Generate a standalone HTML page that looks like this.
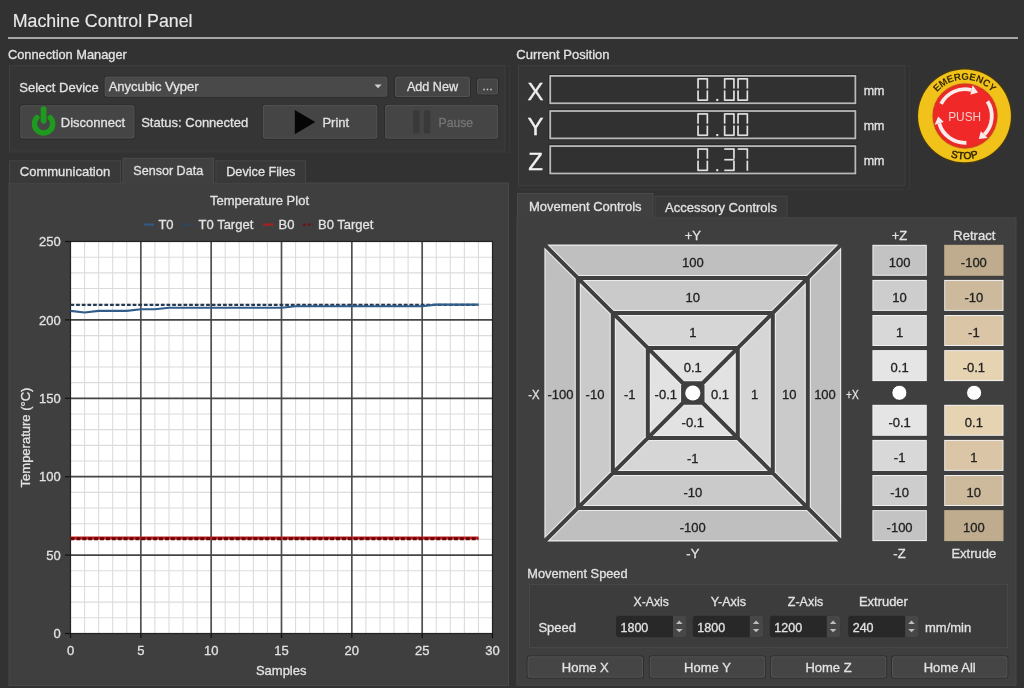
<!DOCTYPE html>
<html><head><meta charset="utf-8"><style>
html,body{margin:0;padding:0;background:#323232;width:1024px;height:688px;overflow:hidden}
svg{display:block;will-change:transform}
text{font-family:"Liberation Sans",sans-serif}
</style></head><body>
<svg width="1024" height="688" viewBox="0 0 1024 688">
<rect x="0" y="0" width="1024" height="688" fill="#323232" />
<text x="12.7" y="27" font-size="17.8" fill="#e8e8e8" stroke="#e8e8e8" stroke-width="0.15" text-anchor="start" >Machine Control Panel</text>
<rect x="8" y="37" width="1010" height="2" fill="#a6a6a6" />
<text x="8" y="58.6" font-size="12.8" fill="#e2e2e2" stroke="#e2e2e2" stroke-width="0.3" text-anchor="start" >Connection Manager</text>
<rect x="9" y="65.3" width="501" height="88" fill="#393939" />
<rect x="10" y="66.3" width="499" height="86" fill="#313131" />
<rect x="9" y="65.3" width="496.5" height="86.2" fill="#3f3f3f" />
<rect x="10" y="66.3" width="494.5" height="84.2" fill="#353535" />
<text x="19.3" y="91.7" font-size="13" fill="#e2e2e2" stroke="#e2e2e2" stroke-width="0.3" text-anchor="start" >Select Device</text>
<rect x="103.8" y="75.8" width="284.40000000000003" height="21.8" rx="3" fill="#2a2a2a"/>
<rect x="104.6" y="76.6" width="282.8" height="20.2" rx="2.5" fill="#535353"/>
<rect x="105.6" y="77.6" width="280.8" height="18.2" rx="2" fill="#494949"/>
<text x="108.7" y="91.3" font-size="13" fill="#e2e2e2" stroke="#e2e2e2" stroke-width="0.3" text-anchor="start" >Anycubic Vyper</text>
<path d="M374.4 84.6 L381.7 84.6 L378.05 88.3 Z" fill="#cfcfcf"/>
<rect x="394.2" y="75.7" width="76.6" height="22.1" rx="3" fill="#2a2a2a"/>
<rect x="395" y="76.5" width="75" height="20.5" rx="2.5" fill="#535353"/>
<rect x="396" y="77.5" width="73" height="18.5" rx="2" fill="#454545"/>
<text x="432.5" y="91.2" font-size="13" fill="#e2e2e2" stroke="#e2e2e2" stroke-width="0.3" text-anchor="middle"  textLength="51.2" lengthAdjust="spacingAndGlyphs">Add New</text>
<rect x="476.2" y="77.7" width="22.6" height="17.6" rx="3" fill="#2a2a2a"/>
<rect x="477" y="78.5" width="21" height="16" rx="2.5" fill="#535353"/>
<rect x="478" y="79.5" width="19" height="14" rx="2" fill="#454545"/>
<circle cx="484" cy="89.5" r="0.9" fill="#bbb"/>
<circle cx="487.5" cy="89.5" r="0.9" fill="#bbb"/>
<circle cx="491" cy="89.5" r="0.9" fill="#bbb"/>
<rect x="19.5" y="104.4" width="115.8" height="35.0" rx="3" fill="#2a2a2a"/>
<rect x="20.3" y="105.2" width="114.2" height="33.4" rx="2.5" fill="#535353"/>
<rect x="21.3" y="106.2" width="112.2" height="31.4" rx="2" fill="#454545"/>
<path d="M50.26 117.69 A9.1 9.1 0 1 1 36.94 117.69" fill="none" stroke="#1e9a1e" stroke-width="5.4" stroke-linecap="round"/>
<line x1="43.6" y1="109.1" x2="43.6" y2="120.8" stroke="#1e9a1e" stroke-width="5.8" stroke-linecap="round"/>
<text x="60.8" y="127.2" font-size="13" fill="#e2e2e2" stroke="#e2e2e2" stroke-width="0.3" text-anchor="start" >Disconnect</text>
<text x="141.2" y="127.2" font-size="13" fill="#e2e2e2" stroke="#e2e2e2" stroke-width="0.3" text-anchor="start" >Status: Connected</text>
<rect x="262.0" y="104.0" width="116.19999999999999" height="35.6" rx="3" fill="#2a2a2a"/>
<rect x="262.8" y="104.8" width="114.6" height="34" rx="2.5" fill="#535353"/>
<rect x="263.8" y="105.8" width="112.6" height="32" rx="2" fill="#454545"/>
<path d="M294.8 109.9 L315.3 122 L294.8 134.2 Z" fill="#050505"/>
<text x="322.4" y="127.2" font-size="13" fill="#e2e2e2" stroke="#e2e2e2" stroke-width="0.3" text-anchor="start" >Print</text>
<rect x="384.3" y="104.0" width="114.69999999999999" height="35.6" rx="3" fill="#2a2a2a"/>
<rect x="385.1" y="104.8" width="113.1" height="34" rx="2.5" fill="#535353"/>
<rect x="386.1" y="105.8" width="111.1" height="32" rx="2" fill="#454545"/>
<rect x="413.2" y="110.4" width="6.3" height="23" fill="#393939" />
<rect x="423.9" y="110.4" width="6.4" height="23" fill="#393939" />
<text x="438.6" y="127.1" font-size="12.2" fill="#757575" stroke="#757575" stroke-width="0.3" text-anchor="start" >Pause</text>
<rect x="8.5" y="182.5" width="500.5" height="503.5" fill="#484848" />
<rect x="9.5" y="183.5" width="498.5" height="501.5" fill="#3f3f3f" />
<rect x="9" y="160.3" width="112" height="22.5" fill="#454545" />
<rect x="10" y="161.3" width="110" height="21.5" fill="#393939" />
<text x="65.0" y="176.35000000000002" font-size="13" fill="#e2e2e2" stroke="#e2e2e2" stroke-width="0.3" text-anchor="middle" >Communication</text>
<rect x="122.5" y="157.8" width="91.5" height="25.5" fill="#4a4a4a" />
<rect x="123.5" y="158.8" width="89.5" height="25.5" fill="#404040" />
<text x="168.25" y="175.25000000000003" font-size="13" fill="#e2e2e2" stroke="#e2e2e2" stroke-width="0.3" text-anchor="middle"  textLength="69.8" lengthAdjust="spacingAndGlyphs">Sensor Data</text>
<rect x="215.5" y="160.3" width="90.5" height="22.5" fill="#454545" />
<rect x="216.5" y="161.3" width="88.5" height="21.5" fill="#393939" />
<text x="260.75" y="176.35000000000002" font-size="13" fill="#e2e2e2" stroke="#e2e2e2" stroke-width="0.3" text-anchor="middle"  textLength="69.2" lengthAdjust="spacingAndGlyphs">Device Files</text>
<text x="259.5" y="204.7" font-size="13" fill="#e2e2e2" stroke="#e2e2e2" stroke-width="0.3" text-anchor="middle" >Temperature Plot</text>
<rect x="70.5" y="241.5" width="422.0" height="392.0" fill="#ffffff" />
<line x1="84.57" y1="241.5" x2="84.57" y2="633.5" stroke="#dcdcdc" stroke-width="1.1"/>
<line x1="98.63" y1="241.5" x2="98.63" y2="633.5" stroke="#dcdcdc" stroke-width="1.1"/>
<line x1="112.70" y1="241.5" x2="112.70" y2="633.5" stroke="#dcdcdc" stroke-width="1.1"/>
<line x1="126.77" y1="241.5" x2="126.77" y2="633.5" stroke="#dcdcdc" stroke-width="1.1"/>
<line x1="154.90" y1="241.5" x2="154.90" y2="633.5" stroke="#dcdcdc" stroke-width="1.1"/>
<line x1="168.97" y1="241.5" x2="168.97" y2="633.5" stroke="#dcdcdc" stroke-width="1.1"/>
<line x1="183.03" y1="241.5" x2="183.03" y2="633.5" stroke="#dcdcdc" stroke-width="1.1"/>
<line x1="197.10" y1="241.5" x2="197.10" y2="633.5" stroke="#dcdcdc" stroke-width="1.1"/>
<line x1="225.23" y1="241.5" x2="225.23" y2="633.5" stroke="#dcdcdc" stroke-width="1.1"/>
<line x1="239.30" y1="241.5" x2="239.30" y2="633.5" stroke="#dcdcdc" stroke-width="1.1"/>
<line x1="253.37" y1="241.5" x2="253.37" y2="633.5" stroke="#dcdcdc" stroke-width="1.1"/>
<line x1="267.43" y1="241.5" x2="267.43" y2="633.5" stroke="#dcdcdc" stroke-width="1.1"/>
<line x1="295.57" y1="241.5" x2="295.57" y2="633.5" stroke="#dcdcdc" stroke-width="1.1"/>
<line x1="309.63" y1="241.5" x2="309.63" y2="633.5" stroke="#dcdcdc" stroke-width="1.1"/>
<line x1="323.70" y1="241.5" x2="323.70" y2="633.5" stroke="#dcdcdc" stroke-width="1.1"/>
<line x1="337.77" y1="241.5" x2="337.77" y2="633.5" stroke="#dcdcdc" stroke-width="1.1"/>
<line x1="365.90" y1="241.5" x2="365.90" y2="633.5" stroke="#dcdcdc" stroke-width="1.1"/>
<line x1="379.97" y1="241.5" x2="379.97" y2="633.5" stroke="#dcdcdc" stroke-width="1.1"/>
<line x1="394.03" y1="241.5" x2="394.03" y2="633.5" stroke="#dcdcdc" stroke-width="1.1"/>
<line x1="408.10" y1="241.5" x2="408.10" y2="633.5" stroke="#dcdcdc" stroke-width="1.1"/>
<line x1="436.23" y1="241.5" x2="436.23" y2="633.5" stroke="#dcdcdc" stroke-width="1.1"/>
<line x1="450.30" y1="241.5" x2="450.30" y2="633.5" stroke="#dcdcdc" stroke-width="1.1"/>
<line x1="464.37" y1="241.5" x2="464.37" y2="633.5" stroke="#dcdcdc" stroke-width="1.1"/>
<line x1="478.43" y1="241.5" x2="478.43" y2="633.5" stroke="#dcdcdc" stroke-width="1.1"/>
<line x1="70.5" y1="617.82" x2="492.5" y2="617.82" stroke="#dcdcdc" stroke-width="1.1"/>
<line x1="70.5" y1="602.14" x2="492.5" y2="602.14" stroke="#dcdcdc" stroke-width="1.1"/>
<line x1="70.5" y1="586.46" x2="492.5" y2="586.46" stroke="#dcdcdc" stroke-width="1.1"/>
<line x1="70.5" y1="570.78" x2="492.5" y2="570.78" stroke="#dcdcdc" stroke-width="1.1"/>
<line x1="70.5" y1="539.42" x2="492.5" y2="539.42" stroke="#dcdcdc" stroke-width="1.1"/>
<line x1="70.5" y1="523.74" x2="492.5" y2="523.74" stroke="#dcdcdc" stroke-width="1.1"/>
<line x1="70.5" y1="508.06" x2="492.5" y2="508.06" stroke="#dcdcdc" stroke-width="1.1"/>
<line x1="70.5" y1="492.38" x2="492.5" y2="492.38" stroke="#dcdcdc" stroke-width="1.1"/>
<line x1="70.5" y1="461.02" x2="492.5" y2="461.02" stroke="#dcdcdc" stroke-width="1.1"/>
<line x1="70.5" y1="445.34" x2="492.5" y2="445.34" stroke="#dcdcdc" stroke-width="1.1"/>
<line x1="70.5" y1="429.66" x2="492.5" y2="429.66" stroke="#dcdcdc" stroke-width="1.1"/>
<line x1="70.5" y1="413.98" x2="492.5" y2="413.98" stroke="#dcdcdc" stroke-width="1.1"/>
<line x1="70.5" y1="382.62" x2="492.5" y2="382.62" stroke="#dcdcdc" stroke-width="1.1"/>
<line x1="70.5" y1="366.94" x2="492.5" y2="366.94" stroke="#dcdcdc" stroke-width="1.1"/>
<line x1="70.5" y1="351.26" x2="492.5" y2="351.26" stroke="#dcdcdc" stroke-width="1.1"/>
<line x1="70.5" y1="335.58" x2="492.5" y2="335.58" stroke="#dcdcdc" stroke-width="1.1"/>
<line x1="70.5" y1="304.22" x2="492.5" y2="304.22" stroke="#dcdcdc" stroke-width="1.1"/>
<line x1="70.5" y1="288.54" x2="492.5" y2="288.54" stroke="#dcdcdc" stroke-width="1.1"/>
<line x1="70.5" y1="272.86" x2="492.5" y2="272.86" stroke="#dcdcdc" stroke-width="1.1"/>
<line x1="70.5" y1="257.18" x2="492.5" y2="257.18" stroke="#dcdcdc" stroke-width="1.1"/>
<line x1="140.83" y1="241.5" x2="140.83" y2="633.5" stroke="#505050" stroke-width="1.7"/>
<line x1="211.17" y1="241.5" x2="211.17" y2="633.5" stroke="#505050" stroke-width="1.7"/>
<line x1="281.50" y1="241.5" x2="281.50" y2="633.5" stroke="#505050" stroke-width="1.7"/>
<line x1="351.83" y1="241.5" x2="351.83" y2="633.5" stroke="#505050" stroke-width="1.7"/>
<line x1="422.17" y1="241.5" x2="422.17" y2="633.5" stroke="#505050" stroke-width="1.7"/>
<line x1="70.5" y1="555.10" x2="492.5" y2="555.10" stroke="#454545" stroke-width="1.7"/>
<line x1="70.5" y1="476.70" x2="492.5" y2="476.70" stroke="#454545" stroke-width="1.7"/>
<line x1="70.5" y1="398.30" x2="492.5" y2="398.30" stroke="#454545" stroke-width="1.7"/>
<line x1="70.5" y1="319.90" x2="492.5" y2="319.90" stroke="#454545" stroke-width="1.7"/>
<rect x="70.5" y="241.5" width="422.0" height="392.0" fill="none" stroke="#222" stroke-width="1.2"/>
<line x1="70.50" y1="633.5" x2="70.50" y2="638.0" stroke="#111" stroke-width="1.2"/>
<text x="70.50" y="655.4" font-size="13" fill="#e2e2e2" stroke="#e2e2e2" stroke-width="0.3" text-anchor="middle" >0</text>
<line x1="140.83" y1="633.5" x2="140.83" y2="638.0" stroke="#111" stroke-width="1.2"/>
<text x="140.83" y="655.4" font-size="13" fill="#e2e2e2" stroke="#e2e2e2" stroke-width="0.3" text-anchor="middle" >5</text>
<line x1="211.17" y1="633.5" x2="211.17" y2="638.0" stroke="#111" stroke-width="1.2"/>
<text x="211.17" y="655.4" font-size="13" fill="#e2e2e2" stroke="#e2e2e2" stroke-width="0.3" text-anchor="middle" >10</text>
<line x1="281.50" y1="633.5" x2="281.50" y2="638.0" stroke="#111" stroke-width="1.2"/>
<text x="281.50" y="655.4" font-size="13" fill="#e2e2e2" stroke="#e2e2e2" stroke-width="0.3" text-anchor="middle" >15</text>
<line x1="351.83" y1="633.5" x2="351.83" y2="638.0" stroke="#111" stroke-width="1.2"/>
<text x="351.83" y="655.4" font-size="13" fill="#e2e2e2" stroke="#e2e2e2" stroke-width="0.3" text-anchor="middle" >20</text>
<line x1="422.17" y1="633.5" x2="422.17" y2="638.0" stroke="#111" stroke-width="1.2"/>
<text x="422.17" y="655.4" font-size="13" fill="#e2e2e2" stroke="#e2e2e2" stroke-width="0.3" text-anchor="middle" >25</text>
<line x1="492.50" y1="633.5" x2="492.50" y2="638.0" stroke="#111" stroke-width="1.2"/>
<text x="492.50" y="655.4" font-size="13" fill="#e2e2e2" stroke="#e2e2e2" stroke-width="0.3" text-anchor="middle" >30</text>
<line x1="65.0" y1="633.50" x2="70.5" y2="633.50" stroke="#111" stroke-width="1.2"/>
<text x="60.8" y="638.20" font-size="13" fill="#e2e2e2" stroke="#e2e2e2" stroke-width="0.3" text-anchor="end" >0</text>
<line x1="65.0" y1="555.10" x2="70.5" y2="555.10" stroke="#111" stroke-width="1.2"/>
<text x="60.8" y="559.80" font-size="13" fill="#e2e2e2" stroke="#e2e2e2" stroke-width="0.3" text-anchor="end" >50</text>
<line x1="65.0" y1="476.70" x2="70.5" y2="476.70" stroke="#111" stroke-width="1.2"/>
<text x="60.8" y="481.40" font-size="13" fill="#e2e2e2" stroke="#e2e2e2" stroke-width="0.3" text-anchor="end" >100</text>
<line x1="65.0" y1="398.30" x2="70.5" y2="398.30" stroke="#111" stroke-width="1.2"/>
<text x="60.8" y="403.00" font-size="13" fill="#e2e2e2" stroke="#e2e2e2" stroke-width="0.3" text-anchor="end" >150</text>
<line x1="65.0" y1="319.90" x2="70.5" y2="319.90" stroke="#111" stroke-width="1.2"/>
<text x="60.8" y="324.60" font-size="13" fill="#e2e2e2" stroke="#e2e2e2" stroke-width="0.3" text-anchor="end" >200</text>
<line x1="65.0" y1="241.50" x2="70.5" y2="241.50" stroke="#111" stroke-width="1.2"/>
<text x="60.8" y="246.20" font-size="13" fill="#e2e2e2" stroke="#e2e2e2" stroke-width="0.3" text-anchor="end" >250</text>
<text x="281.2" y="675" font-size="13" fill="#e2e2e2" stroke="#e2e2e2" stroke-width="0.3" text-anchor="middle" >Samples</text>
<text x="0" y="0" font-size="13" fill="#e2e2e2" stroke="#e2e2e2" stroke-width="0.3" text-anchor="middle" transform="translate(30.2 437.5) rotate(-90)">Temperature (°C)</text>
<polyline points="70.5,304.92 478.43,304.92" fill="none" stroke="#253a52" stroke-width="2.3" stroke-dasharray="3.7 1.95"/>
<polyline points="70.50,310.89 84.57,312.46 98.63,310.89 112.70,310.89 126.77,310.89 140.83,309.32 154.90,309.32 168.97,307.76 183.03,307.76 197.10,307.76 211.17,307.76 225.23,307.76 239.30,307.76 253.37,307.76 267.43,307.76 281.50,307.76 295.57,306.19 309.63,306.19 323.70,306.19 337.77,306.19 351.83,306.19 365.90,306.19 379.97,306.19 394.03,306.19 408.10,306.19 422.17,306.19 436.23,304.62 450.30,304.62 464.37,304.62 478.43,304.62" fill="none" stroke="#315d8c" stroke-width="2.1"/>
<polyline points="70.5,538.00 478.43,538.00" fill="none" stroke="#c02020" stroke-width="3.0"/>
<polyline points="70.5,538.70 478.43,538.70" fill="none" stroke="#6a0404" stroke-width="3.0" stroke-dasharray="4 1.9"/>
<line x1="144" y1="224.6" x2="154" y2="224.6" stroke="#34587e" stroke-width="2.4"/>
<text x="158.4" y="228.79999999999998" font-size="13" fill="#e2e2e2" stroke="#e2e2e2" stroke-width="0.3" text-anchor="start" >T0</text>
<line x1="182" y1="224.6" x2="193.5" y2="224.6" stroke="#2d4866" stroke-width="2.2" stroke-dasharray="3.5 1.5"/>
<text x="198.6" y="228.79999999999998" font-size="13" fill="#e2e2e2" stroke="#e2e2e2" stroke-width="0.3" text-anchor="start" >T0 Target</text>
<line x1="263" y1="224.6" x2="273.5" y2="224.6" stroke="#a02222" stroke-width="2.4"/>
<text x="278.5" y="228.79999999999998" font-size="13" fill="#e2e2e2" stroke="#e2e2e2" stroke-width="0.3" text-anchor="start" >B0</text>
<line x1="302.7" y1="224.6" x2="312.8" y2="224.6" stroke="#6a1414" stroke-width="2.2" stroke-dasharray="3 1.8"/>
<text x="318" y="228.79999999999998" font-size="13" fill="#e2e2e2" stroke="#e2e2e2" stroke-width="0.3" text-anchor="start" >B0 Target</text>
<text x="516.3" y="58.6" font-size="13" fill="#e2e2e2" stroke="#e2e2e2" stroke-width="0.3" text-anchor="start" >Current Position</text>
<rect x="518" y="65.3" width="392" height="124.5" fill="#393939" />
<rect x="519" y="66.3" width="390" height="122.5" fill="#313131" />
<rect x="518" y="65.3" width="387.5" height="121" fill="#3f3f3f" />
<rect x="519" y="66.3" width="385.5" height="119" fill="#353535" />
<text x="535.6" y="99.5" font-size="24" fill="#f0f0f0" stroke="#f0f0f0" stroke-width="0.3" text-anchor="middle" >X</text>
<rect x="548.4" y="74.1" width="308.8" height="31" fill="#242424" />
<rect x="549.3" y="75" width="307" height="29.2" fill="#b9b9b9" />
<rect x="551.0999999999999" y="76.8" width="303.4" height="25.599999999999998" fill="#313131" />
<rect x="697.65" y="78.00" width="10.10" height="1.70" fill="#e0e0e0" />
<rect x="706.50" y="78.45" width="1.70" height="10.10" fill="#e0e0e0" />
<rect x="706.50" y="90.45" width="1.70" height="10.10" fill="#e0e0e0" />
<rect x="697.65" y="99.30" width="10.10" height="1.70" fill="#e0e0e0" />
<rect x="697.20" y="90.45" width="1.70" height="10.10" fill="#e0e0e0" />
<rect x="697.20" y="78.45" width="1.70" height="10.10" fill="#e0e0e0" />
<rect x="724.25" y="78.00" width="10.10" height="1.70" fill="#e0e0e0" />
<rect x="733.10" y="78.45" width="1.70" height="10.10" fill="#e0e0e0" />
<rect x="733.10" y="90.45" width="1.70" height="10.10" fill="#e0e0e0" />
<rect x="724.25" y="99.30" width="10.10" height="1.70" fill="#e0e0e0" />
<rect x="723.80" y="90.45" width="1.70" height="10.10" fill="#e0e0e0" />
<rect x="723.80" y="78.45" width="1.70" height="10.10" fill="#e0e0e0" />
<rect x="737.65" y="78.00" width="10.10" height="1.70" fill="#e0e0e0" />
<rect x="746.50" y="78.45" width="1.70" height="10.10" fill="#e0e0e0" />
<rect x="746.50" y="90.45" width="1.70" height="10.10" fill="#e0e0e0" />
<rect x="737.65" y="99.30" width="10.10" height="1.70" fill="#e0e0e0" />
<rect x="737.20" y="90.45" width="1.70" height="10.10" fill="#e0e0e0" />
<rect x="737.20" y="78.45" width="1.70" height="10.10" fill="#e0e0e0" />
<rect x="716.2" y="98.9" width="2.1" height="2.1" fill="#e0e0e0" />
<text x="863.7" y="94.6" font-size="12.5" fill="#e2e2e2" stroke="#e2e2e2" stroke-width="0.3" text-anchor="start" >mm</text>
<text x="535.6" y="134.6" font-size="24" fill="#f0f0f0" stroke="#f0f0f0" stroke-width="0.3" text-anchor="middle" >Y</text>
<rect x="548.4" y="109.19999999999999" width="308.8" height="31" fill="#242424" />
<rect x="549.3" y="110.1" width="307" height="29.2" fill="#b9b9b9" />
<rect x="551.0999999999999" y="111.89999999999999" width="303.4" height="25.599999999999998" fill="#313131" />
<rect x="697.65" y="113.10" width="10.10" height="1.70" fill="#e0e0e0" />
<rect x="706.50" y="113.55" width="1.70" height="10.10" fill="#e0e0e0" />
<rect x="706.50" y="125.55" width="1.70" height="10.10" fill="#e0e0e0" />
<rect x="697.65" y="134.40" width="10.10" height="1.70" fill="#e0e0e0" />
<rect x="697.20" y="125.55" width="1.70" height="10.10" fill="#e0e0e0" />
<rect x="697.20" y="113.55" width="1.70" height="10.10" fill="#e0e0e0" />
<rect x="724.25" y="113.10" width="10.10" height="1.70" fill="#e0e0e0" />
<rect x="733.10" y="113.55" width="1.70" height="10.10" fill="#e0e0e0" />
<rect x="733.10" y="125.55" width="1.70" height="10.10" fill="#e0e0e0" />
<rect x="724.25" y="134.40" width="10.10" height="1.70" fill="#e0e0e0" />
<rect x="723.80" y="125.55" width="1.70" height="10.10" fill="#e0e0e0" />
<rect x="723.80" y="113.55" width="1.70" height="10.10" fill="#e0e0e0" />
<rect x="737.65" y="113.10" width="10.10" height="1.70" fill="#e0e0e0" />
<rect x="746.50" y="113.55" width="1.70" height="10.10" fill="#e0e0e0" />
<rect x="746.50" y="125.55" width="1.70" height="10.10" fill="#e0e0e0" />
<rect x="737.65" y="134.40" width="10.10" height="1.70" fill="#e0e0e0" />
<rect x="737.20" y="125.55" width="1.70" height="10.10" fill="#e0e0e0" />
<rect x="737.20" y="113.55" width="1.70" height="10.10" fill="#e0e0e0" />
<rect x="716.2" y="134.0" width="2.1" height="2.1" fill="#e0e0e0" />
<text x="863.7" y="129.7" font-size="12.5" fill="#e2e2e2" stroke="#e2e2e2" stroke-width="0.3" text-anchor="start" >mm</text>
<text x="535.6" y="169.7" font-size="24" fill="#f0f0f0" stroke="#f0f0f0" stroke-width="0.3" text-anchor="middle" >Z</text>
<rect x="548.4" y="144.29999999999998" width="308.8" height="31" fill="#242424" />
<rect x="549.3" y="145.2" width="307" height="29.2" fill="#b9b9b9" />
<rect x="551.0999999999999" y="147.0" width="303.4" height="25.599999999999998" fill="#313131" />
<rect x="697.65" y="148.20" width="10.10" height="1.70" fill="#e0e0e0" />
<rect x="706.50" y="148.65" width="1.70" height="10.10" fill="#e0e0e0" />
<rect x="706.50" y="160.65" width="1.70" height="10.10" fill="#e0e0e0" />
<rect x="697.65" y="169.50" width="10.10" height="1.70" fill="#e0e0e0" />
<rect x="697.20" y="160.65" width="1.70" height="10.10" fill="#e0e0e0" />
<rect x="697.20" y="148.65" width="1.70" height="10.10" fill="#e0e0e0" />
<rect x="724.25" y="148.20" width="10.10" height="1.70" fill="#e0e0e0" />
<rect x="733.10" y="148.65" width="1.70" height="10.10" fill="#e0e0e0" />
<rect x="724.25" y="158.85" width="10.10" height="1.70" fill="#e0e0e0" />
<rect x="733.10" y="160.65" width="1.70" height="10.10" fill="#e0e0e0" />
<rect x="724.25" y="169.50" width="10.10" height="1.70" fill="#e0e0e0" />
<rect x="737.65" y="148.20" width="10.10" height="1.70" fill="#e0e0e0" />
<rect x="746.50" y="148.65" width="1.70" height="10.10" fill="#e0e0e0" />
<rect x="746.50" y="160.65" width="1.70" height="10.10" fill="#e0e0e0" />
<rect x="716.2" y="169.1" width="2.1" height="2.1" fill="#e0e0e0" />
<text x="863.7" y="164.79999999999998" font-size="12.5" fill="#e2e2e2" stroke="#e2e2e2" stroke-width="0.3" text-anchor="start" >mm</text>
<circle cx="964.5" cy="115.9" r="47.6" fill="#4a3a10"/>
<circle cx="964.5" cy="115.9" r="46.4" fill="#f1c21a"/>
<circle cx="965.0" cy="116.0" r="33.2" fill="#e8a020"/>
<circle cx="965.0" cy="116.0" r="32.4" fill="#d83420"/>
<circle cx="965.0" cy="116.0" r="30.6" fill="#f02828"/>
<text x="964.7" y="121.2" font-size="13.6" fill="#f6cccc" text-anchor="middle" textLength="33" lengthAdjust="spacingAndGlyphs">PUSH</text>
<path d="M941.12 103.83 A26.8 26.8 0 0 1 971.48 90.00" fill="none" stroke="#fbecec" stroke-width="3.8"/>
<path d="M972.64 85.34 L977.99 92.56 L970.32 94.65 Z" fill="#fbecec"/>
<path d="M987.48 101.40 A26.8 26.8 0 0 1 984.28 134.62" fill="none" stroke="#fbecec" stroke-width="3.8"/>
<path d="M987.73 137.95 L978.80 138.97 L980.83 131.28 Z" fill="#fbecec"/>
<path d="M966.40 142.76 A26.8 26.8 0 0 1 939.24 123.39" fill="none" stroke="#fbecec" stroke-width="3.8"/>
<path d="M934.62 124.71 L938.20 116.47 L943.85 122.06 Z" fill="#fbecec"/>
<defs><path id="arcTop" d="M928.3 115.9 A36.2 36.2 0 0 1 1000.7 115.9"/><path id="arcBot" d="M920.9 115.9 A43.6 43.6 0 0 0 1008.1 115.9"/></defs>
<text font-size="9.8" fill="#3a2a00" font-weight="bold" letter-spacing="-0.1"><textPath href="#arcTop" startOffset="50%" text-anchor="middle">EMERGENCY</textPath></text>
<text font-size="10.8" fill="#3a2a00" font-weight="bold"><textPath href="#arcBot" startOffset="50%" text-anchor="middle">STOP</textPath></text>
<rect x="516.5" y="217.3" width="500" height="468.5" fill="#484848" />
<rect x="517.5" y="218.3" width="498" height="466.5" fill="#3f3f3f" />
<rect x="517" y="193" width="136.5" height="24.8" fill="#4a4a4a" />
<rect x="518" y="194" width="134.5" height="24.8" fill="#404040" />
<text x="585.25" y="211.10000000000002" font-size="13" fill="#e2e2e2" stroke="#e2e2e2" stroke-width="0.3" text-anchor="middle" >Movement Controls</text>
<rect x="654.5" y="195.8" width="133" height="21.5" fill="#454545" />
<rect x="655.5" y="196.8" width="131" height="20.5" fill="#393939" />
<text x="721.0" y="212.15000000000003" font-size="13" fill="#e2e2e2" stroke="#e2e2e2" stroke-width="0.3" text-anchor="middle" >Accessory Controls</text>
<path d="M547.23 244.60 L838.37 244.60 L806.97 276.00 L578.63 276.00 Z" fill="#ececec"/>
<path d="M549.88 245.70 L835.72 245.70 L806.52 274.90 L579.08 274.90 Z" fill="#bfbfbf"/>
<path d="M841.20 247.43 L841.20 538.57 L809.80 507.17 L809.80 278.83 Z" fill="#ececec"/>
<path d="M840.10 250.08 L840.10 535.92 L810.90 506.72 L810.90 279.28 Z" fill="#bfbfbf"/>
<path d="M838.37 541.40 L547.23 541.40 L578.63 510.00 L806.97 510.00 Z" fill="#ececec"/>
<path d="M835.72 540.30 L549.88 540.30 L579.08 511.10 L806.52 511.10 Z" fill="#bfbfbf"/>
<path d="M544.40 538.57 L544.40 247.43 L575.80 278.83 L575.80 507.17 Z" fill="#ececec"/>
<path d="M545.50 535.92 L545.50 250.08 L574.70 279.28 L574.70 506.72 Z" fill="#bfbfbf"/>
<path d="M582.63 280.00 L802.97 280.00 L771.97 311.00 L613.63 311.00 Z" fill="#ececec"/>
<path d="M585.28 281.10 L800.32 281.10 L771.52 309.90 L614.08 309.90 Z" fill="#cacaca"/>
<path d="M805.80 282.83 L805.80 503.17 L774.80 472.17 L774.80 313.83 Z" fill="#ececec"/>
<path d="M804.70 285.48 L804.70 500.52 L775.90 471.72 L775.90 314.28 Z" fill="#cacaca"/>
<path d="M802.97 506.00 L582.63 506.00 L613.63 475.00 L771.97 475.00 Z" fill="#ececec"/>
<path d="M800.32 504.90 L585.28 504.90 L614.08 476.10 L771.52 476.10 Z" fill="#cacaca"/>
<path d="M579.80 503.17 L579.80 282.83 L610.80 313.83 L610.80 472.17 Z" fill="#ececec"/>
<path d="M580.90 500.52 L580.90 285.48 L609.70 314.28 L609.70 471.72 Z" fill="#cacaca"/>
<path d="M617.63 315.00 L767.97 315.00 L736.97 346.00 L648.63 346.00 Z" fill="#ececec"/>
<path d="M620.28 316.10 L765.32 316.10 L736.52 344.90 L649.08 344.90 Z" fill="#d6d6d6"/>
<path d="M770.80 317.83 L770.80 468.17 L739.80 437.17 L739.80 348.83 Z" fill="#ececec"/>
<path d="M769.70 320.48 L769.70 465.52 L740.90 436.72 L740.90 349.28 Z" fill="#d6d6d6"/>
<path d="M767.97 471.00 L617.63 471.00 L648.63 440.00 L736.97 440.00 Z" fill="#ececec"/>
<path d="M765.32 469.90 L620.28 469.90 L649.08 441.10 L736.52 441.10 Z" fill="#d6d6d6"/>
<path d="M614.80 468.17 L614.80 317.83 L645.80 348.83 L645.80 437.17 Z" fill="#ececec"/>
<path d="M615.90 465.52 L615.90 320.48 L644.70 349.28 L644.70 436.72 Z" fill="#d6d6d6"/>
<path d="M652.63 350.00 L732.97 350.00 L701.67 381.30 L683.93 381.30 Z" fill="#ececec"/>
<path d="M655.28 351.10 L730.32 351.10 L701.22 380.20 L684.38 380.20 Z" fill="#e2e2e2"/>
<path d="M735.80 352.83 L735.80 433.17 L704.50 401.87 L704.50 384.13 Z" fill="#ececec"/>
<path d="M734.70 355.48 L734.70 430.52 L705.60 401.42 L705.60 384.58 Z" fill="#e2e2e2"/>
<path d="M732.97 436.00 L652.63 436.00 L683.93 404.70 L701.67 404.70 Z" fill="#ececec"/>
<path d="M730.32 434.90 L655.28 434.90 L684.38 405.80 L701.22 405.80 Z" fill="#e2e2e2"/>
<path d="M649.80 433.17 L649.80 352.83 L681.10 384.13 L681.10 401.87 Z" fill="#ececec"/>
<path d="M650.90 430.52 L650.90 355.48 L680.00 384.58 L680.00 401.42 Z" fill="#e2e2e2"/>
<circle cx="692.8" cy="393.0" r="7.6" fill="#ffffff"/>
<text x="692.8" y="266.7" font-size="13" fill="#222222" stroke="#222222" stroke-width="0.3" text-anchor="middle" >100</text>
<text x="692.8" y="302.4" font-size="13" fill="#222222" stroke="#222222" stroke-width="0.3" text-anchor="middle" >10</text>
<text x="692.8" y="337.0" font-size="13" fill="#222222" stroke="#222222" stroke-width="0.3" text-anchor="middle" >1</text>
<text x="692.8" y="372.0" font-size="13" fill="#222222" stroke="#222222" stroke-width="0.3" text-anchor="middle" >0.1</text>
<text x="692.8" y="427.2" font-size="13" fill="#222222" stroke="#222222" stroke-width="0.3" text-anchor="middle" >-0.1</text>
<text x="692.8" y="462.5" font-size="13" fill="#222222" stroke="#222222" stroke-width="0.3" text-anchor="middle" >-1</text>
<text x="692.8" y="497.0" font-size="13" fill="#222222" stroke="#222222" stroke-width="0.3" text-anchor="middle" >-10</text>
<text x="692.8" y="532.2" font-size="13" fill="#222222" stroke="#222222" stroke-width="0.3" text-anchor="middle" >-100</text>
<text x="560.5" y="399.1" font-size="13" fill="#222222" stroke="#222222" stroke-width="0.3" text-anchor="middle" >-100</text>
<text x="595" y="399.1" font-size="13" fill="#222222" stroke="#222222" stroke-width="0.3" text-anchor="middle" >-10</text>
<text x="629.7" y="399.1" font-size="13" fill="#222222" stroke="#222222" stroke-width="0.3" text-anchor="middle" >-1</text>
<text x="665.8" y="399.1" font-size="13" fill="#222222" stroke="#222222" stroke-width="0.3" text-anchor="middle" >-0.1</text>
<text x="720" y="399.1" font-size="13" fill="#222222" stroke="#222222" stroke-width="0.3" text-anchor="middle" >0.1</text>
<text x="754.7" y="399.1" font-size="13" fill="#222222" stroke="#222222" stroke-width="0.3" text-anchor="middle" >1</text>
<text x="789.3" y="399.1" font-size="13" fill="#222222" stroke="#222222" stroke-width="0.3" text-anchor="middle" >10</text>
<text x="825" y="399.1" font-size="13" fill="#222222" stroke="#222222" stroke-width="0.3" text-anchor="middle" >100</text>
<text x="533.9" y="398.9" font-size="13" fill="#e2e2e2" stroke="#e2e2e2" stroke-width="0.3" text-anchor="middle"  textLength="11.3" lengthAdjust="spacingAndGlyphs">-X</text>
<text x="852.3" y="398.9" font-size="13" fill="#e2e2e2" stroke="#e2e2e2" stroke-width="0.3" text-anchor="middle"  textLength="12.6" lengthAdjust="spacingAndGlyphs">+X</text>
<text x="692.8" y="240" font-size="13" fill="#e2e2e2" stroke="#e2e2e2" stroke-width="0.3" text-anchor="middle" >+Y</text>
<text x="692.8" y="558.4" font-size="13" fill="#e2e2e2" stroke="#e2e2e2" stroke-width="0.3" text-anchor="middle" >-Y</text>
<text x="899.5" y="240.4" font-size="13" fill="#e2e2e2" stroke="#e2e2e2" stroke-width="0.3" text-anchor="middle" >+Z</text>
<text x="974.3" y="240.4" font-size="13" fill="#e2e2e2" stroke="#e2e2e2" stroke-width="0.3" text-anchor="middle" >Retract</text>
<rect x="872.4" y="244.8" width="54.4" height="31" fill="#f0f0f0" />
<rect x="873.4" y="245.8" width="52.4" height="29" fill="#c3c3c3" />
<text x="899.6" y="266.7" font-size="13" fill="#222222" stroke="#222222" stroke-width="0.3" text-anchor="middle" >100</text>
<rect x="944.2" y="244.8" width="59.3" height="31" fill="#bfac8e" />
<rect x="945.2" y="245.8" width="57.3" height="29" fill="#bfac8e" />
<text x="973.85" y="266.7" font-size="13" fill="#222222" stroke="#222222" stroke-width="0.3" text-anchor="middle" >-100</text>
<rect x="872.4" y="510.1" width="54.4" height="31" fill="#f0f0f0" />
<rect x="873.4" y="511.1" width="52.4" height="29" fill="#c3c3c3" />
<text x="899.6" y="532.0" font-size="13" fill="#222222" stroke="#222222" stroke-width="0.3" text-anchor="middle" >-100</text>
<rect x="944.2" y="510.1" width="59.3" height="31" fill="#bfac8e" />
<rect x="945.2" y="511.1" width="57.3" height="29" fill="#bfac8e" />
<text x="973.85" y="532.0" font-size="13" fill="#222222" stroke="#222222" stroke-width="0.3" text-anchor="middle" >100</text>
<rect x="872.4" y="279.9" width="54.4" height="31" fill="#f0f0f0" />
<rect x="873.4" y="280.9" width="52.4" height="29" fill="#cdcdcd" />
<text x="899.6" y="301.79999999999995" font-size="13" fill="#222222" stroke="#222222" stroke-width="0.3" text-anchor="middle" >10</text>
<rect x="944.2" y="279.9" width="59.3" height="31" fill="#f0f0f0" />
<rect x="945.2" y="280.9" width="57.3" height="29" fill="#cdb99b" />
<text x="973.85" y="301.79999999999995" font-size="13" fill="#222222" stroke="#222222" stroke-width="0.3" text-anchor="middle" >-10</text>
<rect x="872.4" y="475" width="54.4" height="31" fill="#f0f0f0" />
<rect x="873.4" y="476" width="52.4" height="29" fill="#cdcdcd" />
<text x="899.6" y="496.9" font-size="13" fill="#222222" stroke="#222222" stroke-width="0.3" text-anchor="middle" >-10</text>
<rect x="944.2" y="475" width="59.3" height="31" fill="#f0f0f0" />
<rect x="945.2" y="476" width="57.3" height="29" fill="#cdb99b" />
<text x="973.85" y="496.9" font-size="13" fill="#222222" stroke="#222222" stroke-width="0.3" text-anchor="middle" >10</text>
<rect x="872.4" y="315" width="54.4" height="31" fill="#f0f0f0" />
<rect x="873.4" y="316" width="52.4" height="29" fill="#d8d8d8" />
<text x="899.6" y="336.9" font-size="13" fill="#222222" stroke="#222222" stroke-width="0.3" text-anchor="middle" >1</text>
<rect x="944.2" y="315" width="59.3" height="31" fill="#f0f0f0" />
<rect x="945.2" y="316" width="57.3" height="29" fill="#dac6a6" />
<text x="973.85" y="336.9" font-size="13" fill="#222222" stroke="#222222" stroke-width="0.3" text-anchor="middle" >-1</text>
<rect x="872.4" y="439.9" width="54.4" height="31" fill="#f0f0f0" />
<rect x="873.4" y="440.9" width="52.4" height="29" fill="#d8d8d8" />
<text x="899.6" y="461.79999999999995" font-size="13" fill="#222222" stroke="#222222" stroke-width="0.3" text-anchor="middle" >-1</text>
<rect x="944.2" y="439.9" width="59.3" height="31" fill="#f0f0f0" />
<rect x="945.2" y="440.9" width="57.3" height="29" fill="#dac6a6" />
<text x="973.85" y="461.79999999999995" font-size="13" fill="#222222" stroke="#222222" stroke-width="0.3" text-anchor="middle" >1</text>
<rect x="872.4" y="350.1" width="54.4" height="31" fill="#f0f0f0" />
<rect x="873.4" y="351.1" width="52.4" height="29" fill="#e5e5e5" />
<text x="899.6" y="372.0" font-size="13" fill="#222222" stroke="#222222" stroke-width="0.3" text-anchor="middle" >0.1</text>
<rect x="944.2" y="350.1" width="59.3" height="31" fill="#f0f0f0" />
<rect x="945.2" y="351.1" width="57.3" height="29" fill="#e6d3b2" />
<text x="973.85" y="372.0" font-size="13" fill="#222222" stroke="#222222" stroke-width="0.3" text-anchor="middle" >-0.1</text>
<rect x="872.4" y="404.8" width="54.4" height="31" fill="#f0f0f0" />
<rect x="873.4" y="405.8" width="52.4" height="29" fill="#e5e5e5" />
<text x="899.6" y="426.7" font-size="13" fill="#222222" stroke="#222222" stroke-width="0.3" text-anchor="middle" >-0.1</text>
<rect x="944.2" y="404.8" width="59.3" height="31" fill="#f0f0f0" />
<rect x="945.2" y="405.8" width="57.3" height="29" fill="#e6d3b2" />
<text x="973.85" y="426.7" font-size="13" fill="#222222" stroke="#222222" stroke-width="0.3" text-anchor="middle" >0.1</text>
<circle cx="899.4" cy="392.8" r="7.5" fill="#fff" stroke="#2a2a2a" stroke-width="0.8"/>
<circle cx="974.1" cy="392.8" r="7.5" fill="#fff" stroke="#2a2a2a" stroke-width="0.8"/>
<text x="899.5" y="558.1" font-size="13" fill="#e2e2e2" stroke="#e2e2e2" stroke-width="0.3" text-anchor="middle" >-Z</text>
<text x="973.8" y="558.1" font-size="13" fill="#e2e2e2" stroke="#e2e2e2" stroke-width="0.3" text-anchor="middle" >Extrude</text>
<text x="527.3" y="577.5" font-size="12.8" fill="#e2e2e2" stroke="#e2e2e2" stroke-width="0.3" text-anchor="start" >Movement Speed</text>
<rect x="529" y="584" width="479" height="64" fill="#474747" />
<rect x="530" y="585" width="477" height="62" fill="#3c3c3c" />
<text x="651.2" y="606.2" font-size="13" fill="#e2e2e2" stroke="#e2e2e2" stroke-width="0.3" text-anchor="middle"  textLength="35.3" lengthAdjust="spacingAndGlyphs">X-Axis</text>
<text x="728.4" y="606.2" font-size="13" fill="#e2e2e2" stroke="#e2e2e2" stroke-width="0.3" text-anchor="middle"  textLength="35.3" lengthAdjust="spacingAndGlyphs">Y-Axis</text>
<text x="805.5" y="606.2" font-size="13" fill="#e2e2e2" stroke="#e2e2e2" stroke-width="0.3" text-anchor="middle"  textLength="35.3" lengthAdjust="spacingAndGlyphs">Z-Axis</text>
<text x="883.4" y="606.2" font-size="13" fill="#e2e2e2" stroke="#e2e2e2" stroke-width="0.3" text-anchor="middle"  textLength="48.9" lengthAdjust="spacingAndGlyphs">Extruder</text>
<text x="538.4" y="631.6" font-size="13" fill="#e2e2e2" stroke="#e2e2e2" stroke-width="0.3" text-anchor="start" >Speed</text>
<rect x="616" y="615.7" width="70.5" height="21.5" rx="3" fill="#282828"/>
<path d="M673 615.7 H683.5 A3 3 0 0 1 686.5 618.7 V634.2 A3 3 0 0 1 683.5 637.2 H673 Z" fill="#474747"/>
<text x="620.5" y="631.6" font-size="12.5" fill="#e2e2e2" stroke="#e2e2e2" stroke-width="0.3" text-anchor="start" >1800</text>
<path d="M676.0 624 L682.5999999999999 624 L679.3 620.6 Z" fill="#bdbdbd"/>
<path d="M676.0 628.9 L682.5999999999999 628.9 L679.3 632.3 Z" fill="#bdbdbd"/>
<rect x="692.8" y="615.7" width="70.5" height="21.5" rx="3" fill="#282828"/>
<path d="M749.8 615.7 H760.3 A3 3 0 0 1 763.3 618.7 V634.2 A3 3 0 0 1 760.3 637.2 H749.8 Z" fill="#474747"/>
<text x="697.3" y="631.6" font-size="12.5" fill="#e2e2e2" stroke="#e2e2e2" stroke-width="0.3" text-anchor="start" >1800</text>
<path d="M752.8 624 L759.3999999999999 624 L756.0999999999999 620.6 Z" fill="#bdbdbd"/>
<path d="M752.8 628.9 L759.3999999999999 628.9 L756.0999999999999 632.3 Z" fill="#bdbdbd"/>
<rect x="769.8" y="615.7" width="70.5" height="21.5" rx="3" fill="#282828"/>
<path d="M826.8 615.7 H837.3 A3 3 0 0 1 840.3 618.7 V634.2 A3 3 0 0 1 837.3 637.2 H826.8 Z" fill="#474747"/>
<text x="774.3" y="631.6" font-size="12.5" fill="#e2e2e2" stroke="#e2e2e2" stroke-width="0.3" text-anchor="start" >1200</text>
<path d="M829.8 624 L836.3999999999999 624 L833.0999999999999 620.6 Z" fill="#bdbdbd"/>
<path d="M829.8 628.9 L836.3999999999999 628.9 L833.0999999999999 632.3 Z" fill="#bdbdbd"/>
<rect x="848.2" y="615.7" width="70.5" height="21.5" rx="3" fill="#282828"/>
<path d="M905.2 615.7 H915.7 A3 3 0 0 1 918.7 618.7 V634.2 A3 3 0 0 1 915.7 637.2 H905.2 Z" fill="#474747"/>
<text x="852.7" y="631.6" font-size="12.5" fill="#e2e2e2" stroke="#e2e2e2" stroke-width="0.3" text-anchor="start" >240</text>
<path d="M908.2 624 L914.8 624 L911.5 620.6 Z" fill="#bdbdbd"/>
<path d="M908.2 628.9 L914.8 628.9 L911.5 632.3 Z" fill="#bdbdbd"/>
<text x="925" y="631.6" font-size="13" fill="#e2e2e2" stroke="#e2e2e2" stroke-width="0.3" text-anchor="start" >mm/min</text>
<rect x="526.7" y="655.4000000000001" width="117.1" height="23.1" rx="3" fill="#2a2a2a"/>
<rect x="527.5" y="656.2" width="115.5" height="21.5" rx="2.5" fill="#535353"/>
<rect x="528.5" y="657.2" width="113.5" height="19.5" rx="2" fill="#454545"/>
<text x="585.25" y="671.5" font-size="13" fill="#e2e2e2" stroke="#e2e2e2" stroke-width="0.3" text-anchor="middle" >Home X</text>
<rect x="648.9000000000001" y="655.4000000000001" width="117.1" height="23.1" rx="3" fill="#2a2a2a"/>
<rect x="649.7" y="656.2" width="115.5" height="21.5" rx="2.5" fill="#535353"/>
<rect x="650.7" y="657.2" width="113.5" height="19.5" rx="2" fill="#454545"/>
<text x="707.45" y="671.5" font-size="13" fill="#e2e2e2" stroke="#e2e2e2" stroke-width="0.3" text-anchor="middle" >Home Y</text>
<rect x="770.0" y="655.4000000000001" width="117.1" height="23.1" rx="3" fill="#2a2a2a"/>
<rect x="770.8" y="656.2" width="115.5" height="21.5" rx="2.5" fill="#535353"/>
<rect x="771.8" y="657.2" width="113.5" height="19.5" rx="2" fill="#454545"/>
<text x="828.55" y="671.5" font-size="13" fill="#e2e2e2" stroke="#e2e2e2" stroke-width="0.3" text-anchor="middle" >Home Z</text>
<rect x="891.2" y="655.4000000000001" width="117.1" height="23.1" rx="3" fill="#2a2a2a"/>
<rect x="892" y="656.2" width="115.5" height="21.5" rx="2.5" fill="#535353"/>
<rect x="893" y="657.2" width="113.5" height="19.5" rx="2" fill="#454545"/>
<text x="949.75" y="671.5" font-size="13" fill="#e2e2e2" stroke="#e2e2e2" stroke-width="0.3" text-anchor="middle" >Home All</text>
</svg></body></html>
